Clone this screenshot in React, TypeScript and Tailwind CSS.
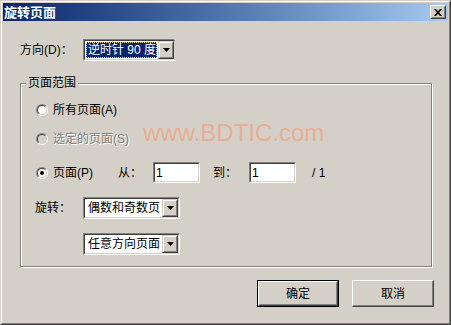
import React from "react";

function DropBtn() {
  return (
    <div className="flex h-full w-[16px] shrink-0 border border-t-[#d4d0c8] border-l-[#d4d0c8] border-r-[#404040] border-b-[#404040]">
      <div className="flex flex-1 items-center justify-center border border-t-white border-l-white border-r-[#808080] border-b-[#808080] bg-[#d4d0c8]">
        <svg width="7" height="4" viewBox="0 0 7 4">
          <polygon points="0,0 7,0 3.5,4" fill="#000" />
        </svg>
      </div>
    </div>
  );
}

function Combo({ w, text, selected }: { w: string; text: string; selected?: boolean }) {
  return (
    <div className={`flex h-[22px] ${w} border border-t-[#808080] border-l-[#808080] border-r-white border-b-white`}>
      <div className="flex flex-1 border border-t-[#404040] border-l-[#404040] border-r-[#d4d0c8] border-b-[#d4d0c8] bg-white">
        <div className="flex min-w-0 flex-1 items-center overflow-hidden p-px">
          {selected ? (
            <div className="flex h-full flex-1 items-center overflow-hidden whitespace-nowrap border border-dotted border-[#e8e0a0] bg-[#0a246a] pl-[1px] text-white">
              {text}
            </div>
          ) : (
            <span className="whitespace-nowrap pl-[2px] text-black">{text}</span>
          )}
        </div>
        <DropBtn />
      </div>
    </div>
  );
}

function Input({ value }: { value: string }) {
  return (
    <div className="flex h-[21px] w-[47px] border border-t-[#808080] border-l-[#808080] border-r-white border-b-white">
      <div className="flex flex-1 items-center border border-t-[#404040] border-l-[#404040] border-r-[#d4d0c8] border-b-[#d4d0c8] bg-white pl-[1px] text-black">
        {value}
      </div>
    </div>
  );
}

function Radio({ checked, disabled }: { checked?: boolean; disabled?: boolean }) {
  return (
    <div className="flex h-[12px] w-[12px] shrink-0 rounded-full border border-t-[#808080] border-l-[#808080] border-r-white border-b-white">
      <div
        className={`flex flex-1 items-center justify-center rounded-full border border-t-[#404040] border-l-[#404040] border-r-[#d4d0c8] border-b-[#d4d0c8] ${
          disabled ? "bg-[#d4d0c8]" : "bg-white"
        }`}
      >
        {checked ? <div className="h-[4px] w-[4px] rounded-full bg-black" /> : null}
      </div>
    </div>
  );
}

function Button({ label, isDefault }: { label: string; isDefault?: boolean }) {
  const inner = (
    <div className="flex flex-1 border border-t-white border-l-white border-r-[#404040] border-b-[#404040]">
      <div className="flex flex-1 items-center justify-center border border-t-[#d4d0c8] border-l-[#d4d0c8] border-r-[#808080] border-b-[#808080] bg-[#d4d0c8] text-black">
        {label}
      </div>
    </div>
  );
  return isDefault ? (
    <div className="flex h-[27px] w-[82px] border border-black">{inner}</div>
  ) : (
    <div className="flex h-[27px] w-[82px]">{inner}</div>
  );
}

export default function App() {
  return (
    <div className="relative h-[325px] w-[451px] overflow-hidden bg-[#d4d0c8] font-['Liberation_Sans','Noto_Sans_CJK_SC',sans-serif] text-[12px] leading-none text-black">
      <div className="flex h-full w-full flex-col border border-t-[#d4d0c8] border-l-[#d4d0c8] border-r-[#404040] border-b-[#404040]">
        <div className="flex flex-1 flex-col border border-t-white border-l-white border-r-[#808080] border-b-[#808080] p-px">
          {/* Title bar */}
          <div className="flex h-[18px] shrink-0 items-center justify-between bg-gradient-to-r from-[#0a246a] to-[#a6caf0] pl-[1px] pr-[2px]">
            <span className="text-[13px] font-bold text-white">旋转页面</span>
            <div className="flex h-[14px] w-[16px] border border-t-white border-l-white border-r-[#404040] border-b-[#404040]">
              <div className="flex flex-1 items-center justify-center border border-t-[#d4d0c8] border-l-[#d4d0c8] border-r-[#808080] border-b-[#808080] bg-[#d4d0c8]">
                <svg width="8" height="7" viewBox="0 0 8 7">
                  <path d="M0 0h2l2 2.2L6 0h2L5 3.5L8 7H6L4 4.8L2 7H0l3-3.5z" fill="#000" />
                </svg>
              </div>
            </div>
          </div>

          {/* Direction row */}
          <div className="ml-[17px] mt-[18px] flex h-[22px] items-center">
            <span className="w-[63px]">方向(D)：</span>
            <Combo w="w-[92px]" text="逆时针 90 度" selected />
          </div>

          {/* Group box */}
          <div className="relative ml-[17px] mt-[22px] flex h-[184px] w-[412px] flex-col border border-[#808080] pl-[15px] pt-[16px] shadow-[1px_1px_0_#fff,inset_1px_1px_0_#fff]">
            <span className="absolute left-[5px] top-[-7px] bg-[#d4d0c8] px-[2px]">页面范围</span>

            <div className="flex h-[20px] items-center gap-[5px]">
              <Radio />
              <span>所有页面(A)</span>
            </div>

            <div className="mt-[9px] flex h-[20px] items-center gap-[5px]">
              <Radio disabled />
              <span className="text-[#808080] [text-shadow:1px_1px_0_#fff]">选定的页面(S)</span>
            </div>

            <div className="mt-[13px] flex h-[21px] items-center">
              <div className="flex w-[82px] items-center gap-[5px]">
                <Radio checked />
                <span>页面(P)</span>
              </div>
              <span className="w-[35px]">从：</span>
              <Input value="1" />
              <span className="ml-[13px] w-[36px]">到：</span>
              <Input value="1" />
              <span className="ml-[16px]">/ 1</span>
            </div>

            <div className="-ml-[1px] mt-[14px] flex h-[22px] items-center">
              <span className="w-[48px]">旋转：</span>
              <Combo w="w-[97px]" text="偶数和奇数页" />
            </div>

            <div className="ml-[47px] mt-[14px] flex h-[22px] items-center">
              <Combo w="w-[97px]" text="任意方向页面" />
            </div>
          </div>

          {/* Buttons */}
          <div className="mr-[14px] mt-[13px] flex justify-end gap-[13px]">
            <Button label="确定" isDefault />
            <Button label="取消" />
          </div>
        </div>
      </div>

      {/* watermark */}
      <span className="pointer-events-none absolute left-[143px] top-[121px] text-[24px] leading-[24px] text-[#e8ae94]">
        www.BDTIC.com
      </span>
    </div>
  );
}
